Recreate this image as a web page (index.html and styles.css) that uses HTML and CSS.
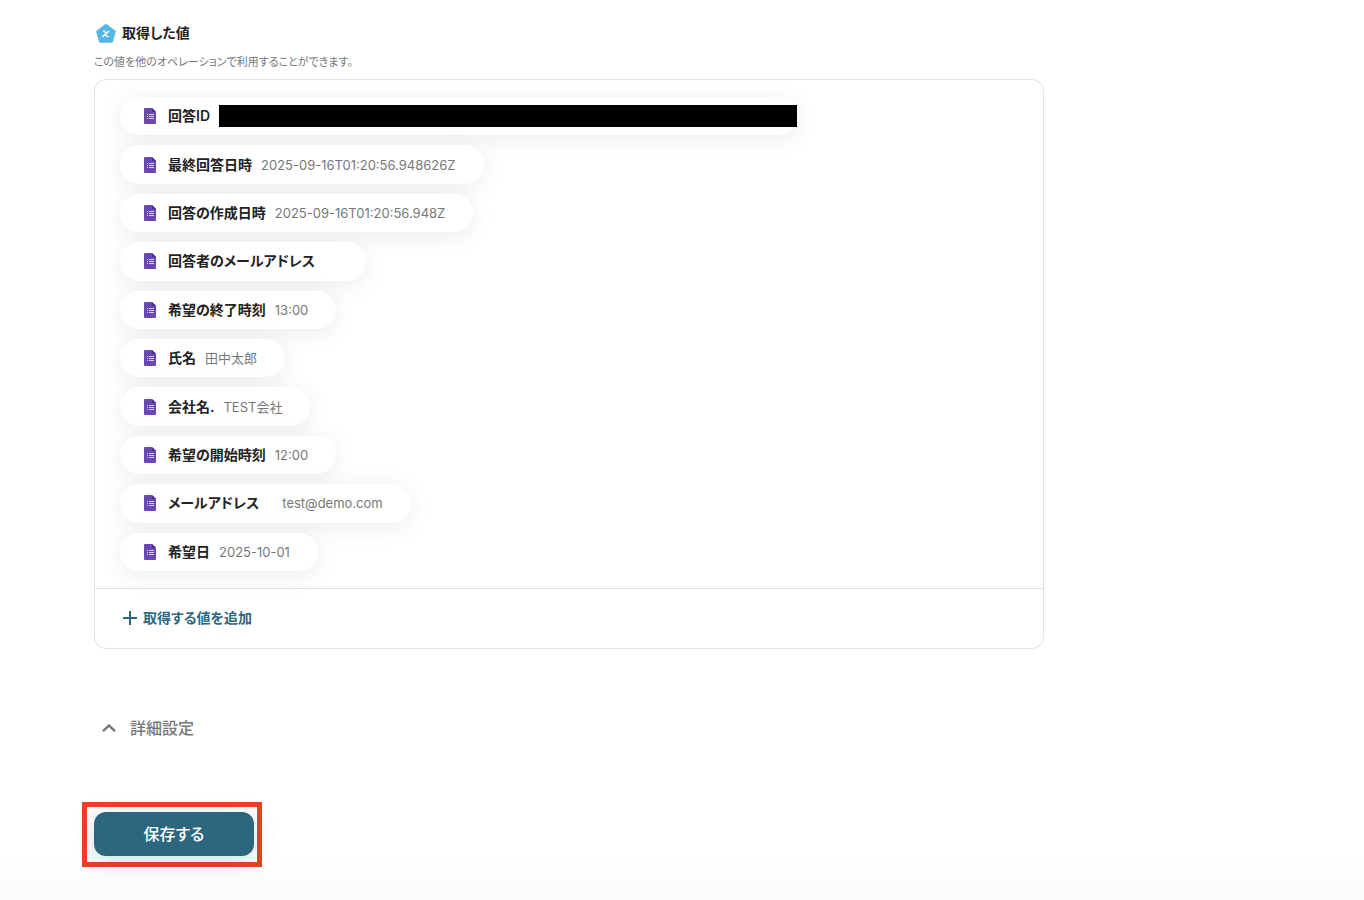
FILE: index.html
```
<!DOCTYPE html>
<html lang="ja">
<head>
<meta charset="utf-8">
<title>取得した値</title>
<link rel="stylesheet" href="styles.css">
</head>
<body>

<!-- Form document icon, used by every value chip -->
<svg class="sprite" width="0" height="0" aria-hidden="true">
    <symbol id="form-icon" viewBox="0 0 12 16">
        <path fill="#6b46b5" d="M1 0H8l4 4v11a1 1 0 0 1-1 1H1a1 1 0 0 1-1-1V1a1 1 0 0 1 1-1z"/>
        <path fill="#4a2b8c" d="M8 0l4 4H9a1 1 0 0 1-1-1z"/>
        <path fill="#d5caec" d="M3 6h1v1H3zM5 6h5v1H5zM3 8h1v1H3zM5 8h5v1H5zM3 10h1v1H3zM5 10h5v1H5z"/>
    </symbol>
</svg>

<main class="content">
    <section>
        <h2 class="heading">
            <svg class="heading-icon" width="20" height="20" viewBox="0 0 20 20" aria-hidden="true">
                <path fill="#55b7e6" stroke="#55b7e6" stroke-width="3" stroke-linejoin="round" d="M10 2.500L18.300 8.600 15.500 18.300H4.500L1.700 8.600z"/>
                <path fill="none" stroke="#fff" stroke-width="1.500" stroke-linecap="round" d="M7.800 8.200h.5q.6 0 .8.600l1.500 4q.2.600.800.600h.5M12.800 8.200L7 13.400"/>
            </svg>
            取得した値
        </h2>
        <p class="description">この値を他のオペレーションで利用することができます。</p>

        <div class="panel">
            <ul class="chips">
                <li class="chip redacted"><svg class="chip-icon"><use href="#form-icon"/></svg><span class="name">回答ID</span><span class="mask"></span></li>
                <li class="chip"><svg class="chip-icon"><use href="#form-icon"/></svg><span class="name">最終回答日時</span><span class="value">2025-09-16T01:20:56.948626Z</span></li>
                <li class="chip"><svg class="chip-icon"><use href="#form-icon"/></svg><span class="name">回答の作成日時</span><span class="value">2025-09-16T01:20:56.948Z</span></li>
                <li class="chip"><svg class="chip-icon"><use href="#form-icon"/></svg><span class="name">回答者のメールアドレス　</span><span class="value"></span></li>
                <li class="chip"><svg class="chip-icon"><use href="#form-icon"/></svg><span class="name">希望の終了時刻</span><span class="value">13:00</span></li>
                <li class="chip"><svg class="chip-icon"><use href="#form-icon"/></svg><span class="name">氏名</span><span class="value">田中太郎</span></li>
                <li class="chip"><svg class="chip-icon"><use href="#form-icon"/></svg><span class="name">会社名.</span><span class="value">TEST会社</span></li>
                <li class="chip"><svg class="chip-icon"><use href="#form-icon"/></svg><span class="name">希望の開始時刻</span><span class="value">12:00</span></li>
                <li class="chip"><svg class="chip-icon"><use href="#form-icon"/></svg><span class="name">メールアドレス　</span><span class="value">test@demo.com</span></li>
                <li class="chip"><svg class="chip-icon"><use href="#form-icon"/></svg><span class="name">希望日</span><span class="value">2025-10-01</span></li>
            </ul>
            <div class="panel-footer">
                <button type="button" class="add-button">
                    <svg width="14" height="14" viewBox="0 0 14 14" aria-hidden="true"><path fill="none" stroke="currentColor" stroke-width="2" d="M7 0v14M0 7h14"/></svg>
                    取得する値を追加
                </button>
            </div>
        </div>
    </section>

    <button type="button" class="details-toggle" aria-expanded="false">
        <svg width="14" height="8" viewBox="0 0 14 8" aria-hidden="true"><path fill="none" stroke="currentColor" stroke-width="2.400" d="M1 7.200l6-5.700 6 5.700"/></svg>
        詳細設定
    </button>

    <div class="save-frame">
        <button type="submit" class="save-button">保存する</button>
    </div>
</main>

<div class="bottom-fade"></div>

</body>
</html>
```
FILE: styles.css
```
* {
    box-sizing: border-box;
}

body {
    margin: 0;
    min-height: 100vh;
    background: #fff;
    color: #222;
    font-family: Inter, "Noto Sans CJK JP", sans-serif;
    font-size: 14px;
    font-feature-settings: "palt";
}

button {
    border: 0;
    padding: 0;
    background: none;
    font: inherit;
    font-feature-settings: inherit;
    cursor: pointer;
}

svg {
    flex: none;
}

.sprite {
    position: absolute;
}

.content {
    max-width: 1044px;
    padding: 23px 0 0 94px;
}

.heading {
    display: flex;
    align-items: center;
    gap: 6px;
    margin: 0;
    padding-left: 2px;
    font-size: 14px;
    font-weight: 600;
    line-height: 20px;
}

.description {
    margin: 9px 0 7px;
    color: #777;
    font-size: 11px;
    line-height: 20px;
}

/* Panel with the list of values */
.panel {
    border: 1px solid #e2e2e2;
    border-radius: 12px;
}

.chips {
    display: grid;
    grid-auto-rows: 1fr;
    justify-items: start;
    gap: 10px;
    min-height: 508px;
    margin: 0;
    padding: 17px 25px;
    list-style: none;
}

.chip {
    display: flex;
    align-items: center;
    padding: 0 28px 0 24px;
    border-radius: 20px;
    background: #fff;
    box-shadow: 0 4px 24px rgba(0, 0, 0, 0.08);
    line-height: 20px;
}

.chip-icon {
    width: 12px;
    height: 16px;
    margin-right: 12px;
}

.name {
    font-weight: 600;
    white-space: pre;
}

.value {
    margin-left: 9px;
    color: #777;
    font-size: 13px;
}

.redacted {
    padding-right: 0;
}

.mask {
    width: 578px;
    height: 22px;
    margin-left: 9px;
    background: #000;
}

.panel-footer {
    padding: 19px 28px 20px;
    border-top: 1px solid #e2e2e2;
}

.add-button {
    display: flex;
    align-items: center;
    gap: 6px;
    color: #2d677f;
    font-weight: 600;
    line-height: 20px;
}

.details-toggle {
    display: flex;
    align-items: center;
    gap: 14px;
    margin: 67px 0 0 8px;
    color: #777;
    font-size: 16px;
    font-weight: 500;
    line-height: 24px;
}

/* Highlighted save button */
.save-frame {
    width: 180px;
    margin: 62px 0 0 -12px;
    padding: 5px 3px 6px 7px;
    border: 5px solid #ed4024;
}

.save-button {
    width: 100%;
    border-radius: 12px;
    background: #2d677f;
    box-shadow: 0 4px 24px rgba(45, 70, 100, 0.2);
    color: #fff;
    font-size: 16px;
    font-weight: 500;
    line-height: 44px;
}

.bottom-fade {
    position: fixed;
    right: 0;
    bottom: 0;
    left: 0;
    height: 50px;
    background: linear-gradient(rgba(0, 0, 0, 0), rgba(0, 0, 0, 0.015));
    pointer-events: none;
}
```
